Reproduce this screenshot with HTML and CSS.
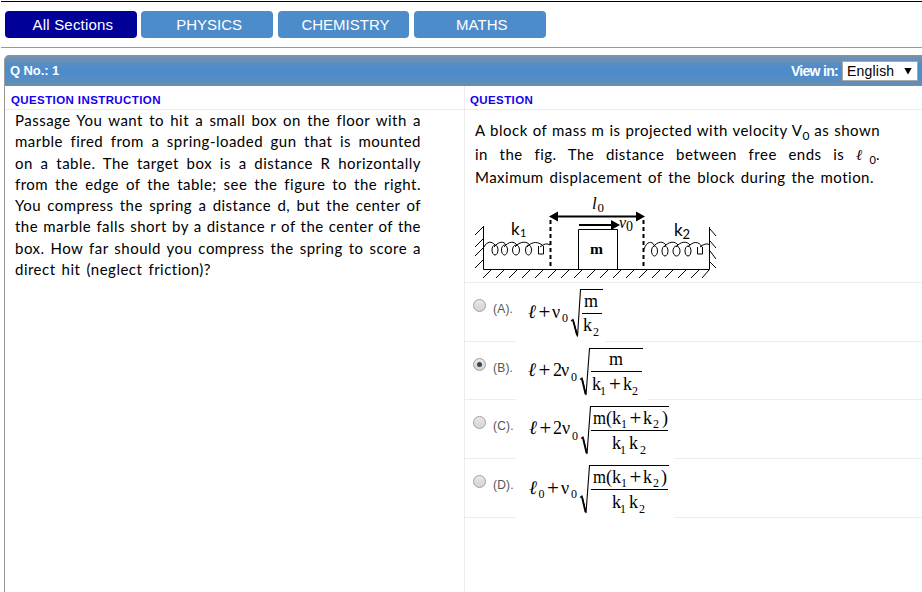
FILE: index.html
```html
<!DOCTYPE html>
<html lang="en">
<head>
<meta charset="utf-8">
<title>Question 1</title>
<link rel="stylesheet" href="styles.css">
</head>
<body>
<nav class="tabs">
  <a class="tab active"><span>All Sections</span></a>
  <a class="tab"><span>PHYSICS</span></a>
  <a class="tab"><span>CHEMISTRY</span></a>
  <a class="tab"><span>MATHS</span></a>
</nav>
<main class="panel">
  <header class="bar">
    <span class="qno">Q No.: 1</span>
    <span class="view">View in:</span>
    <span class="select"><span>English</span><svg width="8" height="8" viewBox="0 0 8 8"><path d="M0.3 1H7.7L4 7.6Z"/></svg></span>
  </header>
  <div class="cols">
    <section class="left">
      <h2 class="head">QUESTION INSTRUCTION</h2>
      <div class="passage">
        <p>Passage You want to hit a small box on the floor with a</p>
        <p>marble fired from a spring-loaded gun that is mounted</p>
        <p>on a table. The target box is a distance R horizontally</p>
        <p>from the edge of the table; see the figure to the right.</p>
        <p>You compress the spring a distance d, but the center of</p>
        <p>the marble falls short by a distance r of the center of the</p>
        <p>box. How far should you compress the spring to score a</p>
        <p class="last">direct hit (neglect friction)?</p>
      </div>
    </section>
    <section class="right">
      <h2 class="head">QUESTION</h2>
      <div class="question">
        <p>A block of mass m is projected with velocity <span class="v">V<sub>0</sub></span> as shown</p>
        <p>in the fig. The distance between free ends is <span class="ell">ℓ<sub>0</sub></span>.</p>
        <p class="short">Maximum displacement of the block during the motion.</p>
      </div>
      <svg class="diagram" width="260" height="92" viewBox="465 190 260 92">
        <g class="line">
          <path d="M483.500 226V269.500H709.500V227"/>
          <path d="M483 227l-8 8M483 239l-8 8M483 248l-8 8M483 260l-8 8M710 229l6 7M710 241l6 7M710 251l6 8M710 262l6 6"/>
          <path d="M491 270l-8 8M504 270l-8 8M517 270l-8 8M530 270l-8 8M543 270l-8 8M556 270l-8 8M569 270l-8 8M582 270l-8 8M595 270l-8 8M608 270l-8 8M621 270l-8 8M634 270l-8 8M647 270l-8 8M660 270l-8 8M673 270l-8 8M686 270l-8 8M699 270l-8 8M709 270l-7 8"/>
          <path d="M578.500 269V229.500H617.500V269"/>
          <path d="M484 247C487 241 492 241 495 245M494 247C499 241 504 241 506 245M504 247C509 241 514 241 517 245M515 247C520 241 527 241 530 245M527 247C532 241 539 241 544 247M540 247Q546 242 550 245"/>
          <path d="M644 249C647 241 652 241 654 245M653 247C658 241 663 241 666 245M664 247C669 241 675 241 678 245M676 247C681 241 687 241 690 245M688 247C693 241 699 241 702 247M700 247Q706 242 710 245"/>
          <g><ellipse cx="495" cy="250" rx="3" ry="5"/><ellipse cx="504.500" cy="250" rx="3" ry="5"/><ellipse cx="516" cy="250" rx="3.500" ry="5"/><ellipse cx="528.500" cy="250" rx="3" ry="5"/><path d="M538.500 246V254H543.500V246"/></g>
          <g><ellipse cx="654.500" cy="251" rx="3" ry="5"/><ellipse cx="665" cy="251" rx="3" ry="5"/><ellipse cx="676.500" cy="251" rx="3.500" ry="5"/><ellipse cx="688" cy="251" rx="3" ry="5"/><path d="M697.500 247V254H702.500V247"/></g>
        </g>
        <path class="dash" d="M550.500 220V268M643.500 220V268"/>
        <path class="arrow" d="M554 216.500H640M579 225H615"/>
        <path d="M549 216.500l9-5v10zM645 216.500l-9-5v10zM620 225l-9-5v10z"/>
        <text x="592" y="209" font-size="17" font-style="italic">l<tspan x="597.500" dy="2.500" font-size="13" font-style="normal">0</tspan></text>
        <text x="619" y="228" font-size="16" font-style="italic">v<tspan x="626" dy="2.500" font-size="14" font-style="normal">0</tspan></text>
        <text class="sans" x="511" y="235" font-size="17">k<tspan x="520" dy="2" font-size="11">1</tspan></text>
        <text class="sans" x="674" y="236" font-size="17">k<tspan x="682.500" dy="3" font-size="13">2</tspan></text>
        <text x="590" y="254" font-size="15" font-weight="bold" textLength="13" lengthAdjust="spacingAndGlyphs">m</text>
      </svg>
      <ul class="options">
        <li class="opt">
          <i class="radio"></i><span class="lab">(A).</span>
          <svg width="89" height="59" viewBox="516 284 89 59">
            <text class="l" x="528" y="318">ℓ</text><text class="p" x="538.500" y="319">+</text><text x="552" y="318">ν</text><text class="s" x="562" y="322">0</text>
            <path class="root" d="M571 321l2-1.500 4.500 17L580.500 289.500H603M582 313.500H602"/><path class="thick" d="M573 320l4 15"/>
            <text x="584" y="307" textLength="15">m</text><text x="583" y="331">k</text><text class="s" x="593" y="336">2</text>
          </svg>
        </li>
        <li class="opt">
          <i class="radio on"></i><span class="lab">(B).</span>
          <svg width="132" height="59" viewBox="516 343 132 59">
            <text class="l" x="528" y="376">ℓ</text><text class="p" x="538.500" y="377">+</text><text x="553" y="376">2</text><text x="561" y="376">ν</text><text class="s" x="571" y="381">0</text>
            <path class="root" d="M580 379.500l2-1.500 4 17L589.500 348.500H643M591 371.500H642"/><path class="thick" d="M582 379l3.500 15"/>
            <text x="609" y="365" textLength="14">m</text><text x="592" y="390">k</text><text class="s" x="600" y="395">1</text><text class="p" x="609" y="391">+</text><text x="623" y="390">k</text><text class="s" x="632" y="395">2</text>
          </svg>
        </li>
        <li class="opt">
          <i class="radio"></i><span class="lab">(C).</span>
          <svg width="158" height="59" viewBox="516 401 158 59">
            <text class="l" x="529" y="434">ℓ</text><text class="p" x="539.500" y="435">+</text><text x="553" y="434">2</text><text x="562" y="434">ν</text><text class="s" x="572" y="440">0</text>
            <path class="root" d="M581 438.500l2-1.500 4 17L590.500 406.500H669M591 430.500H668"/><path class="thick" d="M583 438l3.500 15"/>
            <text x="593" y="424" textLength="13" lengthAdjust="spacingAndGlyphs">m</text><text x="606" y="424">(k</text><text class="s" x="621" y="428">1</text><text class="p" x="629.500" y="425">+</text><text x="643" y="424">k</text><text class="s" x="653" y="428">2</text><text x="662" y="424">)</text>
            <text x="612" y="449">k</text><text class="s" x="620" y="454">1</text><text x="629" y="449">k</text><text class="s" x="640" y="454">2</text>
          </svg>
        </li>
        <li class="opt">
          <i class="radio"></i><span class="lab">(D).</span>
          <svg width="158" height="59" viewBox="516 460 158 59">
            <text class="l" x="529" y="494">ℓ</text><text class="s" x="538.500" y="498">0</text><text class="p" x="547" y="495">+</text><text x="561" y="494">ν</text><text class="s" x="571" y="498">0</text>
            <path class="root" d="M580 497.500l2-1.500 4 17L589.500 465.500H669M591 489.500H668"/><path class="thick" d="M582 497l3.500 15"/>
            <text x="593" y="483" textLength="13" lengthAdjust="spacingAndGlyphs">m</text><text x="606" y="483">(k</text><text class="s" x="621" y="487">1</text><text class="p" x="629.500" y="484">+</text><text x="643" y="483">k</text><text class="s" x="653" y="487">2</text><text x="661" y="483">)</text>
            <text x="612" y="508">k</text><text class="s" x="620" y="513">1</text><text x="629" y="508">k</text><text class="s" x="639" y="513">2</text>
          </svg>
        </li>
      </ul>
    </section>
  </div>
</main>
</body>
</html>
```

FILE: styles.css
```css
* { box-sizing: border-box; }
html, body { margin: 0; height: 100%; overflow: hidden; }
body {
  background: #fff;
  color: #000;
  font-family: "Liberation Sans", Arial, sans-serif;
  display: flex;
  flex-direction: column;
}
p, h2, ul { margin: 0; padding: 0; }

.tabs {
  margin-left: 1px;
  margin-top: 1px;
  height: 47px;
  flex: none;
  border-top: 1px solid #000;
  border-bottom: 1px solid #999;
  padding: 9px 0 0 4px;
  display: flex;
  gap: 4.500px;
}
.tab {
  width: 131.800px;
  height: 27px;
  border-radius: 4px;
  background: #4d8ccb;
  color: #fff;
  font-size: 15px;
  line-height: 27px;
  text-align: center;
  padding-left: 4px;
}
.tab.active { background: #000099; }
.tab.active span { letter-spacing: .2px; }

.panel {
  margin: 7px 0 0 4px;
  flex: 1;
  display: flex;
  flex-direction: column;
  border-left: 1px solid #999;
  border-radius: 5px 0 0 0;
  overflow: hidden;
}
.bar {
  height: 31px;
  flex: none;
  display: flex;
  align-items: center;
  padding: 0 4px 0 5px;
  color: #fff;
  font-size: 14px;
  font-weight: bold;
  background: linear-gradient(#8194a5 0, #6b90b5 12%, #4d8ccb 42%, #4d8ccb 65%, #608eb9 90%, #6b8eb0 100%);
}
.qno { font-size: 13px; letter-spacing: -.1px; }
.view { margin-left: auto; margin-right: 4px; letter-spacing: -.7px; }
.select {
  width: 76px;
  height: 20px;
  background: #fff;
  border: 1px solid #a9a9a9;
  color: #000;
  font-weight: normal;
  font-size: 14px;
  letter-spacing: .2px;
  display: flex;
  align-items: center;
  justify-content: space-between;
  padding: 0 5px 0 4px;
}
.cols { flex: 1; display: flex; }
.left { width: 459px; flex: none; }
.right { flex: 1; border-left: 1px solid #ececec; }
.head {
  height: 24px;
  border-bottom: 1px solid #ececec;
  color: #1400f0;
  font-size: 11.500px;
  line-height: 28px;
  font-weight: bold;
  padding-left: 6px;
  letter-spacing: .4px;
}
.right .head { padding-left: 5px; }
.passage, .question {
  font-family: Lato, sans-serif;
  font-size: 15px;
  letter-spacing: .48px;
  font-variant-ligatures: none;
}
.passage { width: 406px; margin: 0 0 0 10px; }
.passage p, .question p {
  white-space: nowrap;
  text-align: justify;
  text-align-last: justify;
}
.passage p { height: 21.250px; line-height: 21.250px; }
.passage .last { width: 196px; }
.question { width: 405px; margin: 9px 0 0 10px; height: 71px; }
.question p { height: 23.500px; line-height: 23.500px; }
.question .short { width: 399px; }
.question sub { font-size: 12px; line-height: 0; vertical-align: -4px; letter-spacing: 0; }
.ell { font-family: "Liberation Serif", "DejaVu Serif", serif; font-style: italic; letter-spacing: 0; }
.ell sub { font-family: Lato, sans-serif; font-style: normal; font-size: 11px; }

svg { display: block; flex: none; }
.diagram { font-family: "Liberation Serif", serif; }
.diagram .sans { font-family: Lato, sans-serif; }
.line { fill: none; stroke: #000; stroke-width: 1; }
.dash { stroke: #000; stroke-width: 2; stroke-dasharray: 4 3; }
.arrow { stroke: #000; stroke-width: 2; }

.options { list-style: none; border-top: 1px solid #ececec; }
.opt {
  height: 58.700px;
  border-bottom: 1px solid #ececec;
  display: flex;
}
.opt svg {
  background: #fff;
  font-family: "Liberation Serif", serif;
  font-size: 18px;
  margin-top: 1px;
}
.opt .s { font-size: 12px; }
.opt .p { font-size: 21px; }
.opt .l { font-family: "Liberation Serif", "DejaVu Serif", serif; font-style: italic; font-size: 19px; }
.root { fill: none; stroke: #000; stroke-width: 1.100; }
.thick { fill: none; stroke: #000; stroke-width: 1.800; }
.radio {
  width: 13px;
  height: 13px;
  margin: 16px 0 0 8px;
  border: 1px solid #a0a0a0;
  border-radius: 50%;
  background: linear-gradient(#e8e8e8, #d4d4d4);
  display: flex;
  align-items: center;
  justify-content: center;
}
.radio.on::after {
  content: "";
  width: 5px;
  height: 5px;
  border-radius: 50%;
  background: #444;
}
.lab {
  width: 30px;
  padding: 18px 0 0 7px;
  font-size: 12px;
  line-height: 16px;
  color: #555;
  white-space: nowrap;
  letter-spacing: .2px;
}
```
